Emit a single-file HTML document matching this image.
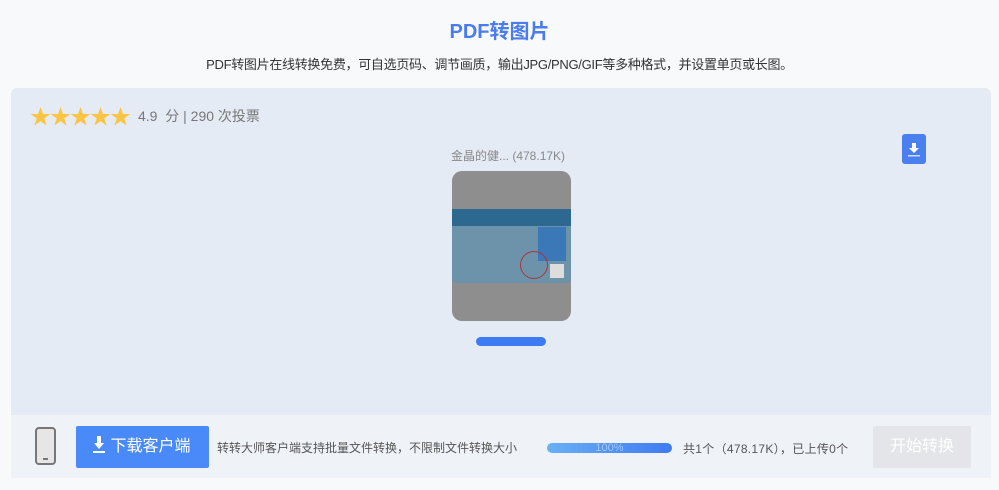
<!DOCTYPE html>
<html><head><meta charset="utf-8"><style>
*{margin:0;padding:0;box-sizing:border-box}
body{width:999px;height:490px;background:#f8f9fb;font-family:"Liberation Sans","Noto Sans CJK SC",sans-serif;position:relative;overflow:hidden}
.a{position:absolute}
</style></head><body>
<div class="a" style="left:0;top:15px;width:999px;text-align:center;font-size:20px;font-weight:bold;color:#4a7cf0">PDF转图片</div>
<div class="a" style="left:0;top:54px;width:999px;text-align:center;font-size:13px;color:#333;letter-spacing:-0.3px">PDF转图片在线转换免费，可自选页码、调节画质，输出JPG/PNG/GIF等多种格式，并设置单页或长图。</div>
<div class="a" style="left:11px;top:88px;width:980px;height:327px;background:#e5ebf5;border-radius:6px 6px 0 0"></div>
<div class="a" style="left:30px;top:101px;font-size:21px;color:#fbc443;letter-spacing:-1px">★★★★★</div>
<div class="a" style="left:138px;top:106px;font-size:14px;color:#777">4.9 &nbsp;分 | 290 次投票</div>
<div class="a" style="left:451px;top:147px;font-size:12px;color:#888">金晶的健... (478.17K)</div>
<div class="a" style="left:902px;top:134px;width:24px;height:30px;background:#4a7ff0;border-radius:3px">
<svg width="24" height="30" viewBox="0 0 24 30"><path d="M10 9h4v5h3l-5 5-5-5h3z" fill="#fff"/><rect x="6" y="21" width="12" height="1.5" fill="#cfdcff"/></svg></div>
<div class="a" style="left:452px;top:171px;width:119px;height:150px;background:#8e8e8e;border-radius:10px;overflow:hidden">
<div class="a" style="left:0;top:38px;width:119px;height:74px;background:#6d93ab;border-radius:4px"></div>
<div class="a" style="left:0;top:38px;width:119px;height:17px;background:#2d6890"></div>
<div class="a" style="left:86px;top:56px;width:28px;height:34px;background:#3a78b8"></div>
<div class="a" style="left:98px;top:93px;width:14px;height:14px;background:#ddd"></div>
<div class="a" style="left:68px;top:80px;width:28px;height:28px;border:1.5px solid #b03040;border-radius:50%"></div>
</div>
<div class="a" style="left:476px;top:337px;width:70px;height:9px;background:#3e7bf2;border-radius:5px"></div>
<div class="a" style="left:11px;top:415px;width:980px;height:63px;background:#eff2f7"></div>
<div class="a" style="left:35px;top:427px;width:21px;height:38px;border:2px solid #777;border-radius:4px;background:#e6e6e6"><div class="a" style="left:6px;top:29px;width:5px;height:2px;background:#777"></div></div>
<div class="a" style="left:76px;top:426px;width:133px;height:42px;background:#4a8af8;border-radius:2px;color:#fff;font-size:16px;line-height:42px;padding-left:16px">
<svg width="14" height="18" viewBox="0 0 14 18" style="vertical-align:-3px"><path d="M5 0h4v7h3l-5 6-5-6h3z" fill="#fff"/><rect x="1" y="15" width="12" height="2" fill="#fff"/></svg> 下载客户端</div>
<div class="a" style="left:217px;top:439px;font-size:12px;color:#555">转转大师客户端支持批量文件转换，不限制文件转换大小</div>
<div class="a" style="left:547px;top:443px;width:125px;height:10px;background:linear-gradient(90deg,#69b0f6,#3e7bf2);border-radius:5px;color:#9fc6fa;font-size:11px;line-height:10px;text-align:center">100%</div>
<div class="a" style="left:683px;top:440px;font-size:12px;color:#555;letter-spacing:0.3px">共1个（478.17K），已上传0个</div>
<div class="a" style="left:873px;top:426px;width:98px;height:42px;background:#e4e5e8;border-radius:2px;color:#fff;font-size:16px;line-height:42px;text-align:center">开始转换</div>
</body></html>
